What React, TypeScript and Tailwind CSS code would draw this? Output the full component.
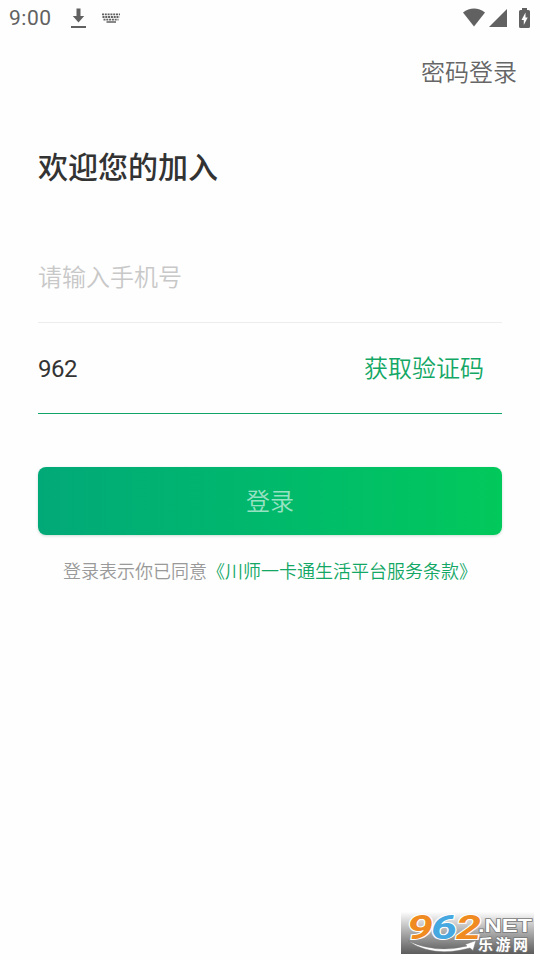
import { useState } from "react"

const labels = {
  passwordLogin: "密码登录",
  welcome: "欢迎您的加入",
  phone: "请输入手机号",
  getCode: "获取验证码",
  login: "登录",
  agree: "登录表示你已同意",
  terms: "《川师一卡通生活平台服务条款》",
}

export default function App() {
  const [phone, setPhone] = useState("")
  const [code, setCode] = useState("962")

  return (
    <div className="relative flex h-[960px] w-[540px] flex-col overflow-hidden bg-[#fefefe] font-[Roboto,'Noto_Sans_CJK_SC',sans-serif] text-[#333]">
      <StatusBar />
      <header className="flex h-[72px] items-center justify-end pt-[2px] pr-[23px] text-2xl text-[#666]">
        <button type="button" className="font-[350]">{labels.passwordLogin}</button>
      </header>
      <main className="flex flex-col px-[38px]">
        <h1 className="mt-[38px] h-11 text-[30px] leading-[44px] font-medium">{labels.welcome}</h1>
        <div className="mt-[41px] flex h-[92px] items-center border-b border-[#ededed] pt-[3px]">
          <input
            value={phone}
            onChange={(event) => setPhone(event.target.value)}
            placeholder={labels.phone}
            className="w-full bg-transparent text-2xl font-[350] outline-none placeholder:text-[#c8c8c8]"
          />
        </div>
        <div className="flex h-[91px] items-center justify-between border-b border-[#12a468] pt-[2px] pr-[18px]">
          <input
            value={code}
            onChange={(event) => setCode(event.target.value)}
            className="w-40 bg-transparent text-2xl tracking-[-0.5px] outline-none"
          />
          <button type="button" className="text-2xl font-[350] text-[#12a765]">
            {labels.getCode}
          </button>
        </div>
        <button
          type="button"
          className="mt-[53px] h-[68px] rounded-lg bg-linear-to-r from-[#02a978] to-[#02c95b] pt-[2px] text-2xl font-[350] text-white/60 shadow-[0_1px_3px_rgba(0,90,50,0.2)]"
        >
          {labels.login}
        </button>
        <p className="mt-[23px] text-center text-lg font-[350] text-[#999]">
          {labels.agree}
          <span className="text-[#12a765]">{labels.terms}</span>
        </p>
      </main>
      <SiteBadge />
    </div>
  )
}

function StatusBar() {
  return (
    <div className="flex h-9 items-center pr-[10px] pl-[9px] text-[#616161]">
      <span className="w-[62px] pt-px text-[21px] tracking-[0.5px]">9:00</span>
      <svg className="h-5 w-4" viewBox="0 0 16 20" fill="currentColor">
        <path d="M5.5 0.500h4v7.500h3.700L7.500 14.500 1.800 8h3.700zM0 18h15v2H0z" />
      </svg>
      <svg className="ml-[15px] h-3 w-[18px]" viewBox="0 0 18 12" fill="none" stroke="currentColor">
        <path d="M0 2.300h18M0.500 5h17M1.500 7.700h15" strokeWidth="1.800" strokeDasharray="2 0.800" />
        <path d="M4.500 10h9.500" strokeWidth="1.500" />
      </svg>
      <svg className="ml-auto h-5 w-6" viewBox="0 0 24 20" fill="currentColor">
        <path d="M1 4.500C7.500 -0.800 16.500 -0.800 23 4.500L12 18.500z" />
      </svg>
      <svg className="ml-[3px] h-[18px] w-[18px]" viewBox="0 0 18 18" fill="currentColor">
        <path d="M18 0v18H0z" />
      </svg>
      <svg className="mb-px ml-3 h-5 w-[11px]" viewBox="0 0 11 20">
        <path
          fill="currentColor"
          d="M3 0h5v2h1.500q1.500 0 1.500 1.500v15q0 1.500-1.500 1.500h-8Q0 20 0 18.500v-15Q0 2 1.500 2H3z"
        />
        <path fill="#fefefe" d="M6.500 4.500 2.500 12h2.300v5L8.700 9.500H6.500z" />
      </svg>
    </div>
  )
}

function SiteBadge() {
  return (
    <div className="absolute top-[912px] left-[401px] h-[42px] w-[133px] bg-linear-to-b from-[#fdfdfd] to-[#5c5c5c]">
      <svg className="h-full w-full overflow-visible" viewBox="0 0 133 42">
        <path
          d="M7 29Q36 42 66 34L64 32.500 75 28.500 72 38.500 69 36Q32 46 7 29z"
          fill="#fff"
          stroke="#777"
          strokeWidth="0.5"
        />
        <g
          fontFamily="Roboto, sans-serif"
          fontWeight="700"
          fontStyle="italic"
          fontSize="34"
          stroke="#fff"
          strokeWidth="2"
          paintOrder="stroke"
        >
          <text x="6" y="26.500" textLength="26" lengthAdjust="spacingAndGlyphs" fill="#f08b22">9</text>
          <text x="30" y="26.500" textLength="26" lengthAdjust="spacingAndGlyphs" fill="#46a8e0">6</text>
          <text x="55" y="26.500" textLength="25" lengthAdjust="spacingAndGlyphs" fill="#f08b22">2</text>
        </g>
        <g fill="#fff" stroke="#777" strokeWidth="1.500" paintOrder="stroke">
          <text
            x="77"
            y="20"
            fontFamily="'Liberation Sans', sans-serif"
            fontWeight="700"
            fontSize="19"
            textLength="54"
            lengthAdjust="spacingAndGlyphs"
          >
            .NET
          </text>
          <text
            x="77"
            y="37.500"
            fontFamily="'Noto Sans CJK SC', sans-serif"
            fontWeight="700"
            fontSize="15"
            textLength="50"
          >
            乐游网
          </text>
        </g>
      </svg>
    </div>
  )
}
